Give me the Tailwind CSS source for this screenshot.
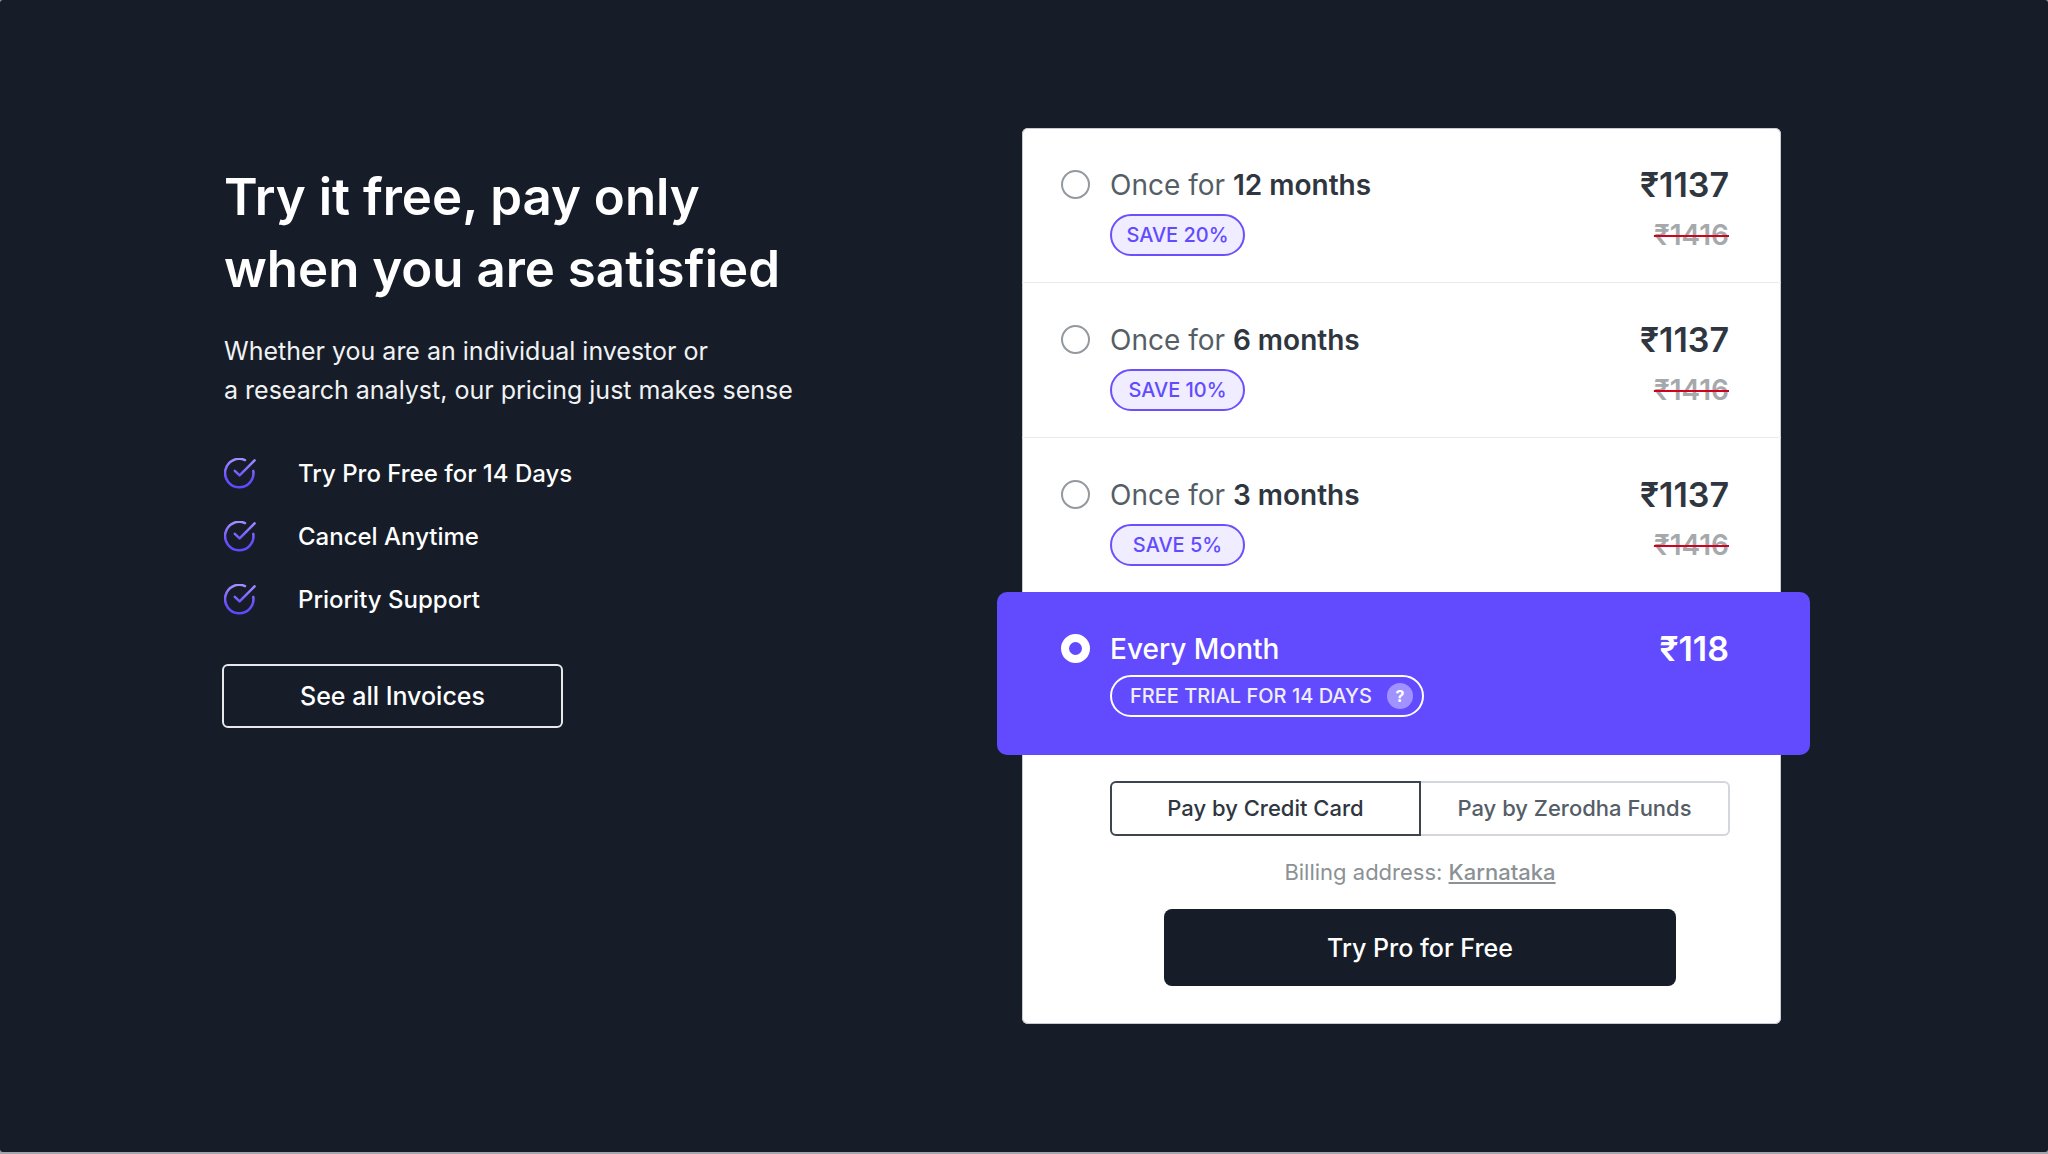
<!DOCTYPE html>
<html lang="en">
<head>
    <meta charset="UTF-8">
    <meta name="viewport" content="width=device-width, initial-scale=1.0">
    <title>Pro Pricing</title>
    <script src="https://cdn.jsdelivr.net/npm/@tailwindcss/browser@4"></script>
</head>
<body class="bg-[#a3a7ad] pb-[2px] font-['Inter','Liberation_Sans',sans-serif]">
    <main class="min-h-[calc(100vh-2px)] bg-[#161d28] rounded-[3px] pt-32 pb-32 pl-[222px] pr-[267px] flex justify-between items-start gap-12">

        <!-- Pitch -->
        <section class="pt-[33px] text-white">
            <h1 class="text-[51px] leading-[72px] font-semibold whitespace-nowrap pl-[2px]">Try it free, pay only<br>when you are satisfied</h1>
            <p class="mt-[27px] pl-[2px] text-[25px] leading-[39px] whitespace-nowrap text-[#f1f2f3]">Whether you are an individual investor or<br>a research analyst, our pricing just makes sense</p>

            <svg class="absolute w-0 h-0" aria-hidden="true">
                <defs>
                    <linearGradient id="tick" x1="0" y1="0" x2="0" y2="32" gradientUnits="userSpaceOnUse">
                        <stop offset="0" stop-color="#a590ff"/>
                        <stop offset="0.6" stop-color="#6a50ff"/>
                        <stop offset="1" stop-color="#5f46ff"/>
                    </linearGradient>
                    <symbol id="check" viewBox="0 0 32 32">
                        <g fill="none" stroke="url(#tick)" stroke-width="2.5" stroke-linecap="round" stroke-linejoin="round">
                            <path d="M21 2.1A14.2 14.2 0 1 0 29.3 13"/>
                            <path d="M10.8 12.8L15.6 17.4L30.6 2.3"/>
                        </g>
                    </symbol>
                </defs>
            </svg>
            <ul class="mt-12 flex flex-col gap-[31px] text-2xl leading-8 font-medium">
                <li class="flex gap-[42px]"><svg class="w-8 h-8 ml-[2px]"><use href="#check"/></svg>Try Pro Free for 14 Days</li>
                <li class="flex gap-[42px]"><svg class="w-8 h-8 ml-[2px]"><use href="#check"/></svg>Cancel Anytime</li>
                <li class="flex gap-[42px]"><svg class="w-8 h-8 ml-[2px]"><use href="#check"/></svg>Priority Support</li>
            </ul>

            <button class="mt-12 w-[341px] h-16 pt-[2px] border-2 border-[#e6e8ea] rounded-md text-[25px] font-medium">See all Invoices</button>
        </section>

        <!-- Plans -->
        <form class="w-[759px] bg-white rounded-md inset-ring inset-ring-[#c6cad1] text-[#2f3640]">
            <label class="flex pt-[39px] pb-[26px] pl-[39px] pr-[52px] border-b border-[#eaecee]">
                <input type="radio" name="plan" class="appearance-none w-[29px] h-[29px] mt-[3px] mr-5 rounded-full border-2 border-[#93999e]">
                <span class="flex-1">
                    <span class="block text-[28px] leading-9 text-[#555e66]">Once for <b class="font-semibold text-[#2f3640]">12 months</b></span>
                    <span class="mt-[11px] w-[135px] h-[42px] flex items-center justify-center rounded-full border-2 border-[#6b50fb] bg-[#efedff] text-[#624bff] text-xl font-medium">SAVE 20%</span>
                </span>
                <span class="text-right font-semibold">
                    <span class="block text-[34px] leading-9">₹1137</span>
                    <s class="block mt-[11px] text-[28px] leading-[42px] text-[#a5a9ac] decoration-[#d0021b] decoration-2">₹1416</s>
                </span>
            </label>
            <label class="flex pt-[39px] pb-[26px] pl-[39px] pr-[52px] border-b border-[#eaecee]">
                <input type="radio" name="plan" class="appearance-none w-[29px] h-[29px] mt-[3px] mr-5 rounded-full border-2 border-[#93999e]">
                <span class="flex-1">
                    <span class="block text-[28px] leading-9 text-[#555e66]">Once for <b class="font-semibold text-[#2f3640]">6 months</b></span>
                    <span class="mt-[11px] w-[135px] h-[42px] flex items-center justify-center rounded-full border-2 border-[#6b50fb] bg-[#efedff] text-[#624bff] text-xl font-medium">SAVE 10%</span>
                </span>
                <span class="text-right font-semibold">
                    <span class="block text-[34px] leading-9">₹1137</span>
                    <s class="block mt-[11px] text-[28px] leading-[42px] text-[#a5a9ac] decoration-[#d0021b] decoration-2">₹1416</s>
                </span>
            </label>
            <label class="flex pt-[39px] pb-[26px] pl-[39px] pr-[52px]">
                <input type="radio" name="plan" class="appearance-none w-[29px] h-[29px] mt-[3px] mr-5 rounded-full border-2 border-[#93999e]">
                <span class="flex-1">
                    <span class="block text-[28px] leading-9 text-[#555e66]">Once for <b class="font-semibold text-[#2f3640]">3 months</b></span>
                    <span class="mt-[11px] w-[135px] h-[42px] flex items-center justify-center rounded-full border-2 border-[#6b50fb] bg-[#efedff] text-[#624bff] text-xl font-medium">SAVE 5%</span>
                </span>
                <span class="text-right font-semibold">
                    <span class="block text-[34px] leading-9">₹1137</span>
                    <s class="block mt-[11px] text-[28px] leading-[42px] text-[#a5a9ac] decoration-[#d0021b] decoration-2">₹1416</s>
                </span>
            </label>

            <!-- Selected plan, wider than the card -->
            <label class="flex -ml-[25px] -mr-[29px] pt-[39px] pb-[38px] pl-[64px] pr-[81px] rounded-[10px] bg-[#624bff] text-white">
                <input type="radio" name="plan" checked class="appearance-none w-[29px] h-[29px] mt-[3px] mr-5 rounded-full border-8 border-white">
                <span class="flex-1">
                    <span class="block text-[28px] leading-9 font-medium">Every Month</span>
                    <span class="mt-2 w-[314px] h-[42px] pl-[18px] pr-[9px] flex items-center justify-between rounded-full border-2 border-white text-xl font-medium whitespace-nowrap text-[#f1efff]">
                        FREE TRIAL FOR 14 DAYS
                        <button type="button" class="w-[26px] h-[26px] rounded-full bg-[#a193ff] text-white text-base leading-none font-bold">?</button>
                    </span>
                </span>
                <span class="block text-[34px] leading-9 font-semibold">₹118</span>
            </label>

            <div class="pl-[88px] pr-[51px] pt-[26px] pb-[38px]">
                <div class="flex text-[22px] font-medium">
                    <button type="button" class="flex-1 h-[55px] rounded-l-md border-2 border-[#3d444d]">Pay by Credit Card</button>
                    <button type="button" class="flex-1 h-[55px] rounded-r-md border-2 border-l-0 border-[#d3d6db] text-[#555e66]">Pay by Zerodha Funds</button>
                </div>
                <p class="mt-5 text-center text-[22px] leading-8 text-[#8b9194]">Billing address: <a href="#" class="font-medium underline decoration-2 underline-offset-2">Karnataka</a></p>
                <div class="mt-[21px] px-[54px]">
                    <button type="submit" class="w-full h-[77px] pt-[2px] rounded-lg bg-[#161d28] text-white text-[25px] font-medium">Try Pro for Free</button>
                </div>
            </div>
        </form>
    </main>
</body>
</html>
